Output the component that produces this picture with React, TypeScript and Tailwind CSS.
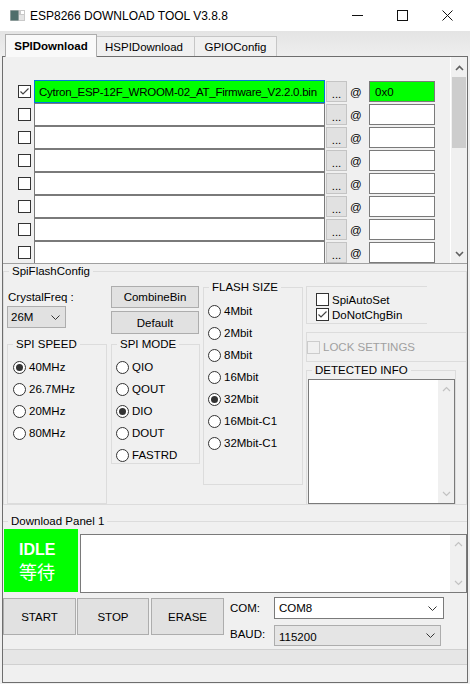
import React from 'react';

function Chevron({ up = false, color = '#606060', sw = 1.6 }: { up?: boolean; color?: string; sw?: number }) {
  return (
    <svg width="9" height="6" viewBox="0 0 9 6">
      <path d={up ? 'M1 5 L4.5 1.5 L8 5' : 'M1 1 L4.5 4.5 L8 1'} fill="none" stroke={color} strokeWidth={sw} />
    </svg>
  );
}

function ComboArrow() {
  return (
    <svg width="9" height="5" viewBox="0 0 9 5">
      <path d="M0.5 0.5 L4.5 4.5 L8.5 0.5" fill="none" stroke="#333" strokeWidth="1" />
    </svg>
  );
}

function Check({ checked = false, disabled = false }: { checked?: boolean; disabled?: boolean }) {
  return (
    <span
      className={`w-[13px] h-[13px] shrink-0 border flex items-center justify-center ${
        disabled ? 'border-[#cccccc]' : 'border-[#333333] bg-white'
      }`}
    >
      {checked && (
        <svg width="11" height="11" viewBox="0 0 11 11">
          <path d="M1.5 5.5 L4 8 L9.5 2.5" fill="none" stroke="#444" strokeWidth="1.2" />
        </svg>
      )}
    </span>
  );
}

function Radio({ label, checked = false }: { label: string; checked?: boolean }) {
  return (
    <div className="flex items-center h-[22px]">
      <span className="w-[13px] h-[13px] shrink-0 rounded-full border border-[#333333] bg-white flex items-center justify-center">
        {checked && <span className="w-[7px] h-[7px] rounded-full bg-[#333333]" />}
      </span>
      <span className="ml-[3px]">{label}</span>
    </div>
  );
}

function Group({ title, className, children }: { title: string; className: string; children?: React.ReactNode }) {
  return (
    <fieldset className={`border-[#dcdcdc] ${className}`}>
      <legend className="ml-[5px] px-[3px] leading-[14px]">{title}</legend>
      {children}
    </fieldset>
  );
}

function Button({ label, className }: { label: string; className: string }) {
  return (
    <div className={`bg-[#e1e1e1] border border-[#adadad] flex items-center justify-center ${className}`}>{label}</div>
  );
}

function TextScroll() {
  return (
    <div className="w-[16px] h-full bg-[#f0f0f0] flex flex-col justify-between items-center py-[6px]">
      <Chevron up color="#c2c2c2" sw={1.2} />
      <Chevron color="#c2c2c2" sw={1.2} />
    </div>
  );
}

export default function App() {
  const rows = Array.from({ length: 8 });
  return (
    <div className="w-[470px] h-[684px] bg-[#f0f0f0] flex flex-col overflow-hidden font-['Liberation_Sans',Arial,sans-serif] text-[11.5px] leading-[14px] text-black">
      {/* title bar */}
      <div className="h-[31px] shrink-0 bg-white flex items-center">
        <svg width="15" height="11" viewBox="0 0 15 11" className="ml-[10px]">
          <rect x="0" y="0" width="15" height="11" fill="#c9c9c9" />
          <rect x="0.5" y="0.5" width="8" height="10" fill="#4f6e6b" />
          <rect x="11" y="1" width="3" height="3" fill="#ffffff" />
          <rect x="9" y="5" width="5" height="5" fill="#e4e4e4" />
        </svg>
        <span className="ml-[5px] text-[12px]">ESP8266 DOWNLOAD TOOL V3.8.8</span>
        <div className="ml-auto flex h-full">
          <div className="w-[45px] flex items-center justify-center">
            <svg width="11" height="1" viewBox="0 0 11 1">
              <rect width="11" height="1" fill="#111" />
            </svg>
          </div>
          <div className="w-[45px] flex items-center justify-center">
            <svg width="11" height="11" viewBox="0 0 11 11">
              <rect x="0.5" y="0.5" width="10" height="10" fill="none" stroke="#111" />
            </svg>
          </div>
          <div className="w-[45px] flex items-center justify-center">
            <svg width="11" height="11" viewBox="0 0 11 11">
              <path d="M0.5 0.5 L10.5 10.5 M10.5 0.5 L0.5 10.5" stroke="#111" strokeWidth="1" />
            </svg>
          </div>
        </div>
      </div>

      {/* tabs */}
      <div className="h-[25px] shrink-0 flex items-end pl-[5px] bg-linear-to-b from-[#e4e4e4] to-[#eeeeee]">
        <div className="relative z-10 -mb-[1px] h-[23px] w-[92px] bg-[#f9f9f9] border border-b-0 border-[#adadad] font-bold flex items-center justify-center">
          SPIDownload
        </div>
        <div className="h-[20px] w-[98px] bg-[#f0f0f0] border border-b-0 border-l-0 border-[#c6c6c6] flex items-center justify-center pr-[3px]">
          HSPIDownload
        </div>
        <div className="h-[20px] w-[82px] bg-[#f0f0f0] border border-b-0 border-l-0 border-[#c6c6c6] flex items-center justify-center">
          GPIOConfig
        </div>
      </div>

      {/* tab panel */}
      <div className="flex-1 min-h-0 mx-[2px] mb-[1px] border border-[#6e6e6e] flex flex-col">
        {/* file list */}
        <div className="h-[207px] shrink-0 flex border-b border-[#a0a0a0] overflow-hidden">
          <div className="flex-1 pt-[23px]">
            {rows.map((_, i) => (
              <div key={i} className="flex items-center h-[23px]">
                <span className="ml-[15px] mr-[3px]">
                  <Check checked={i === 0} />
                </span>
                <div
                  className={`w-[291px] h-[23px] shrink-0 border pl-[4px] flex items-center whitespace-nowrap overflow-hidden tracking-[-0.25px] ${
                    i === 0 ? 'bg-[#00ff00] border-[#0078d7]' : 'bg-white border-[#7a7a7a]'
                  }`}
                >
                  {i === 0 ? 'Cytron_ESP-12F_WROOM-02_AT_Firmware_V2.2.0.bin' : ''}
                </div>
                <div className="ml-[1px] w-[21px] h-[21px] shrink-0 bg-[#e1e1e1] border border-[#c4c4c4] flex items-center justify-center pt-[4px]">
                  ...
                </div>
                <span className="ml-[3px] w-[19px] shrink-0">@</span>
                <div
                  className={`w-[66px] h-[21px] shrink-0 border border-[#7a7a7a] pl-[5px] flex items-center ${
                    i === 0 ? 'bg-[#00ff00]' : 'bg-white'
                  }`}
                >
                  {i === 0 ? '0x0' : ''}
                </div>
              </div>
            ))}
          </div>
          <div className="w-[17px] shrink-0 flex flex-col border-l border-[#ffffff] pt-[2px]">
            <div className="h-[18px] flex items-center justify-center">
              <Chevron up />
            </div>
            <div className="h-[71px] mx-[1px] bg-[#cdcdcd]" />
            <div className="flex-1" />
            <div className="h-[18px] flex items-center justify-center">
              <Chevron />
            </div>
          </div>
        </div>

        {/* SpiFlashConfig */}
        <Group title="SpiFlashConfig" className="border shrink-0">
          <div className="flex items-start">
            {/* left part */}
            <div className="ml-[3px] flex flex-col">
              <div className="flex items-start h-[56px]">
                <div className="w-[100px] flex flex-col">
                  <span className="mt-[12px] pl-[1px]">CrystalFreq :</span>
                  <div className="mt-[2px] w-[59px] h-[22px] bg-[#e1e1e1] border border-[#adadad] flex items-center justify-between pl-[3px] pr-[5px]">
                    <span>26M</span>
                    <ComboArrow />
                  </div>
                </div>
                <div className="ml-[4px] w-[89px] flex flex-col">
                  <Button label="CombineBin" className="mt-[8px] w-[88px] h-[22px]" />
                  <Button label="Default" className="mt-[3px] w-[88px] h-[23px]" />
                </div>
              </div>
              <div className="mt-[3px] flex items-start">
                <Group title="SPI SPEED" className="border w-[100px] h-[167px]">
                  <div className="mt-[5px] pl-[5px]">
                    <Radio label="40MHz" checked />
                    <Radio label="26.7MHz" />
                    <Radio label="20MHz" />
                    <Radio label="80MHz" />
                  </div>
                </Group>
                <Group title="SPI MODE" className="border ml-[4px] w-[89px] h-[127px]">
                  <div className="mt-[5px] pl-[4px]">
                    <Radio label="QIO" />
                    <Radio label="QOUT" />
                    <Radio label="DIO" checked />
                    <Radio label="DOUT" />
                    <Radio label="FASTRD" />
                  </div>
                </Group>
              </div>
            </div>

            {/* flash size */}
            <Group title="FLASH SIZE" className="border ml-[3px] mt-[2px] w-[100px] h-[205px]">
              <div className="mt-[6px] pl-[4px]">
                <Radio label="4Mbit" />
                <Radio label="2Mbit" />
                <Radio label="8Mbit" />
                <Radio label="16Mbit" />
                <Radio label="32Mbit" checked />
                <Radio label="16Mbit-C1" />
                <Radio label="32Mbit-C1" />
              </div>
            </Group>

            {/* right column */}
            <div className="ml-[3px] flex-1 flex flex-col">
              <div className="mt-[8px] w-[121px] h-[38px] border-t border-b border-l border-[#dcdcdc] pt-[4px] pl-[9px]">
                <div className="flex items-center h-[17px]">
                  <Check />
                  <span className="ml-[3px]">SpiAutoSet</span>
                </div>
                <div className="flex items-center h-[13px]">
                  <Check checked />
                  <span className="ml-[3px]">DoNotChgBin</span>
                </div>
              </div>
              <div className="mt-[8px] h-[30px] border-t border-b border-l border-[#dcdcdc] flex items-center">
                <Check disabled />
                <span className="ml-[3px] text-[#a0a0a0]">LOCK SETTINGS</span>
              </div>
              <Group title="DETECTED INFO" className="border border-b-0 mt-[1px] w-[150px]">
                <div className="mt-[2px] ml-[1px] w-[147px] h-[125px] bg-white border border-[#7a7a7a] flex justify-end">
                  <TextScroll />
                </div>
              </Group>
            </div>
          </div>
        </Group>

        {/* Download Panel */}
        <Group title="Download Panel 1" className="border-t mt-[9px] shrink-0">
          <div className="mt-[1px] flex items-start">
            <div className="ml-[1px] w-[74px] h-[63px] bg-[#00ff00] text-white flex flex-col pl-[15px] pt-[11px]">
              <span className="font-bold text-[16px] leading-[20px]">IDLE</span>
              <span className="text-[18px] leading-[22px] font-['Noto_Sans_CJK_SC',sans-serif]">等待</span>
            </div>
            <div className="ml-[2px] mt-[5px] flex-1 h-[59px] bg-white border border-[#7a7a7a] flex justify-end">
              <TextScroll />
            </div>
          </div>
          <div className="mt-[4px] flex items-start">
            <Button label="START" className="mt-[1px] w-[73px] h-[37px]" />
            <Button label="STOP" className="mt-[1px] ml-[1px] w-[72px] h-[37px]" />
            <Button label="ERASE" className="mt-[1px] ml-[2px] w-[73px] h-[37px]" />
            <div className="ml-[6px] flex flex-col">
              <div className="flex items-center h-[22px]">
                <span className="w-[44px]">COM:</span>
                <div className="w-[170px] h-[22px] bg-white border border-[#7a7a7a] flex items-center justify-between pl-[4px] pr-[6px]">
                  <span>COM8</span>
                  <ComboArrow />
                </div>
              </div>
              <div className="mt-[6px] flex items-center h-[21px]">
                <span className="w-[44px] -mt-[3px]">BAUD:</span>
                <div className="w-[167px] h-[21px] bg-[#e5e5e5] border border-[#adadad] flex items-center justify-between pl-[4px] pr-[5px]">
                  <span className="mt-[2px]">115200</span>
                  <ComboArrow />
                </div>
              </div>
            </div>
          </div>
        </Group>

        {/* status bar */}
        <div className="mt-[3px] h-[16px] shrink-0 bg-[#e6e6e6] border-t border-b border-[#d0d0d0]" />
        <div className="flex-1" />
      </div>
    </div>
  );
}
